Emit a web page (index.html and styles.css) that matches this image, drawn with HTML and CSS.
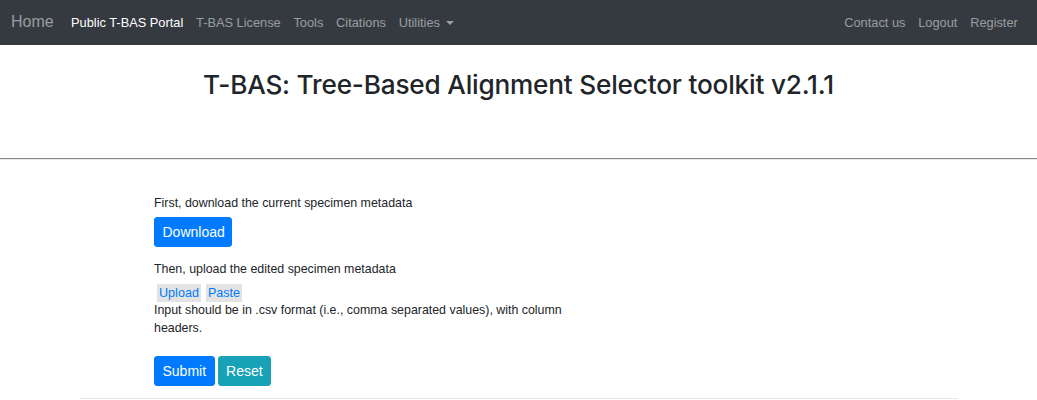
FILE: index.html
```html
<!DOCTYPE html>
<html lang="en">
<head>
<meta charset="utf-8">
<title>T-BAS</title>
<link rel="stylesheet" href="styles.css">
</head>
<body>
<nav class="navbar">
  <a class="brand" href="#">Home</a>
  <ul class="nav-left">
    <li><a class="nav-link active" href="#">Public T-BAS Portal</a></li>
    <li><a class="nav-link" href="#">T-BAS License</a></li>
    <li><a class="nav-link" href="#">Tools</a></li>
    <li><a class="nav-link" href="#">Citations</a></li>
    <li><a class="nav-link dropdown" href="#">Utilities<span class="caret"></span></a></li>
  </ul>
  <ul class="nav-right">
    <li><a class="nav-link" href="#">Contact us</a></li>
    <li><a class="nav-link" href="#">Logout</a></li>
    <li><a class="nav-link" href="#">Register</a></li>
  </ul>
</nav>
<header class="header">
  <h2 class="title">T-BAS: Tree-Based Alignment Selector toolkit v2.1.1</h2>
</header>
<hr class="divider">
<main class="content">
  <div class="form">
    <p class="label">First, download the current specimen metadata</p>
    <button class="btn btn-primary btn-download">Download</button>
    <p class="label label-then">Then, upload the edited specimen metadata</p>
    <div class="tabs"><span class="tab">Upload</span><span class="tab">Paste</span></div>
    <p class="hint">Input should be in .csv format (i.e., comma separated values), with column headers.</p>
    <div class="actions">
      <button class="btn btn-primary">Submit</button>
      <button class="btn btn-info">Reset</button>
    </div>
  </div>
  <hr class="footer-rule">
</main>
</body>
</html>
```
FILE: styles.css
```css
* { box-sizing: border-box; }
html, body { margin: 0; padding: 0; }
body {
  font-family: "Liberation Sans", Arial, Helvetica, sans-serif;
  font-size: 12.4px;
  line-height: 1.5;
  color: #212529;
  background: #fff;
}
.navbar {
  display: flex;
  align-items: center;
  background: #343a40;
  padding: 6.4px 12.8px 6.4px 11px;
  height: 44.8px;
}
.brand {
  font-size: 16px;
  line-height: 1.5;
  color: rgba(255,255,255,.5);
  text-decoration: none;
  margin-right: 11px;
}
.nav-left, .nav-right {
  display: flex;
  list-style: none;
  margin: 0;
  padding: 0;
}
.nav-right { margin-left: auto; }
.nav-link {
  display: block;
  padding: 6.4px;
  color: rgba(255,255,255,.5);
  text-decoration: none;
  font-size: 12.8px;
  line-height: 19.2px;
}
.nav-link.active { color: #fff; }
.caret {
  display: inline-block;
  margin-left: 6px;
  vertical-align: 2px;
  border-top: 4px solid;
  border-right: 4px solid transparent;
  border-left: 4px solid transparent;
}
.header {
  padding-top: 24px;
  text-align: center;
}
.title {
  margin: 0;
  font-family: Inter, "Liberation Sans", sans-serif;
  font-size: 26.2px;
  font-weight: 500;
  line-height: 1.2;
  letter-spacing: -0.2px;
}
.divider {
  margin: 58px 0 0;
  border: 0;
  border-top: 1px solid #8a8a8a;
  border-bottom: 1px solid #e8e8e8;
  height: 0;
}
.content {
  padding: 0 79px 0 80px;
}
.form {
  margin-left: 74px;
  width: 432px;
  padding-top: 34px;
}
.label { margin: 0 0 4px; }
.label-then { margin-top: 13px; }
.btn {
  font-family: inherit;
  font-size: 14px;
  line-height: 1.5;
  border: 1px solid transparent;
  border-radius: 3px;
  color: #fff;
  padding: 4px 7.5px;
  height: 30px;
  cursor: pointer;
}
.btn-primary { background: #007bff; border-color: #007bff; }
.btn-info { background: #17a2b8; border-color: #17a2b8; }
.btn-download { width: 78px; }
.tabs {
  display: flex;
  gap: 5px;
  margin: 6px 0 0 3px;
}
.tab {
  background: #e3e3e3;
  color: #007bff;
  font-size: 12.6px;
  padding: 0 2px;
  line-height: 18px;
}
.hint {
  margin: 0;
  line-height: 17.6px;
}
.actions {
  display: flex;
  gap: 3px;
  margin-top: 18px;
}
.footer-rule {
  margin: 12px 0 0;
  border: 0;
  border-top: 1px solid #e6e6e6;
}
```
